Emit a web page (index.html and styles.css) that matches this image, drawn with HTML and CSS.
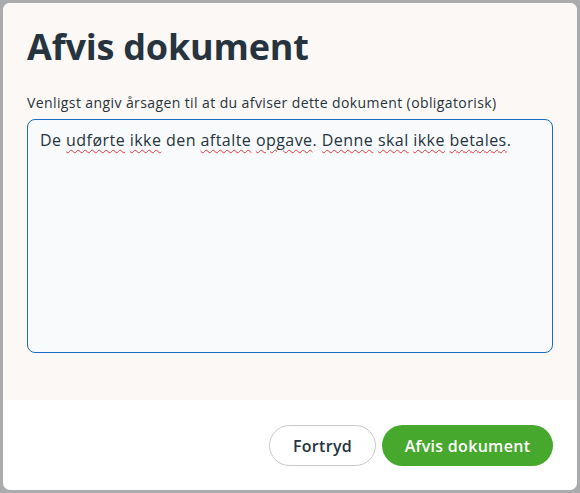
FILE: index.html
```html
<!DOCTYPE html>
<html lang="da">
<head>
<meta charset="utf-8">
<link rel="stylesheet" href="styles.css">
</head>
<body>
<div class="dialog">
  <div class="content">
    <h1 class="title">Afvis dokument</h1>
    <label class="label">Venligst angiv årsagen til at du afviser dette dokument (obligatorisk)</label>
    <div class="textarea">De <span class="sp">udførte</span> <span class="sp">ikke</span> den <span class="sp">aftalte</span> <span class="sp">opgave</span>. <span class="sp">Denne</span> <span class="sp">skal</span> <span class="sp">ikke</span> <span class="sp">betales</span>.</div>
  </div>
  <div class="footer">
    <button class="btn btn-secondary">Fortryd</button>
    <button class="btn btn-primary">Afvis dokument</button>
  </div>
</div>
</body>
</html>
```
FILE: styles.css
```css
html, body {
  margin: 0;
  padding: 0;
}
body {
  background: #a9abac;
  width: 580px;
  height: 493px;
  font-family: "Open Sans", "DejaVu Sans", sans-serif;
  color: #263440;
}
.dialog {
  position: absolute;
  left: 3px;
  top: 3px;
  width: 574px;
  height: 487px;
  border-radius: 7px;
  overflow: hidden;
  background: #ffffff;
  display: flex;
  flex-direction: column;
}
.content {
  background: #fcf8f5;
  height: 397px;
  box-sizing: border-box;
  padding: 22px 24px 0 24px;
  display: flex;
  flex-direction: column;
}
.title {
  margin: 0;
  font-size: 36px;
  line-height: 44px;
  font-weight: 700;
  color: #263440;
  letter-spacing: -0.2px;
}
.label {
  margin-top: 24px;
  font-size: 14px;
  line-height: 20px;
  color: #263440;
  letter-spacing: 0.4px;
}
.textarea {
  margin-top: 6px;
  height: 234px;
  box-sizing: border-box;
  border: 1px solid #1a6ec4;
  border-radius: 8px;
  background: #f8fafc;
  padding: 8px 12px;
  font-size: 16px;
  line-height: 24px;
  color: #263440;
  letter-spacing: 0.45px;
}
.sp {
  text-decoration: underline wavy #e0383e;
  text-decoration-thickness: 1px;
  text-underline-offset: 3px;
}
.footer {
  flex: 1;
  display: flex;
  justify-content: flex-end;
  align-items: flex-start;
  gap: 6px;
  padding: 25px 24px 0 0;
}
.btn {
  height: 41px;
  border-radius: 21px;
  font-family: inherit;
  font-size: 16px;
  font-weight: 600;
  padding: 0 20px;
  cursor: pointer;
  letter-spacing: 0.3px;
}
.btn-secondary {
  background: #ffffff;
  border: 1px solid #c8c8c8;
  color: #263440;
  width: 107px;
}
.btn-primary {
  background: #46a82d;
  border: none;
  color: #ffffff;
  width: 171px;
}
```
